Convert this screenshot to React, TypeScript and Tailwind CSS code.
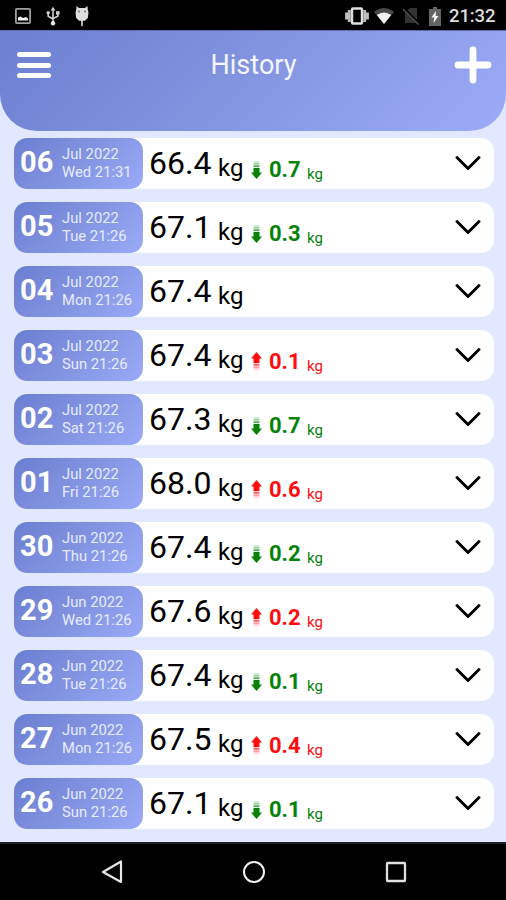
import React from "react";

type Trend = "up" | "down" | null;

interface Entry {
  day: string;
  month: string;
  time: string;
  weight: string;
  trend: Trend;
  delta: string;
}

const entries: Entry[] = [
  { day: "06", month: "Jul 2022", time: "Wed 21:31", weight: "66.4", trend: "down", delta: "0.7" },
  { day: "05", month: "Jul 2022", time: "Tue 21:26", weight: "67.1", trend: "down", delta: "0.3" },
  { day: "04", month: "Jul 2022", time: "Mon 21:26", weight: "67.4", trend: null, delta: "" },
  { day: "03", month: "Jul 2022", time: "Sun 21:26", weight: "67.4", trend: "up", delta: "0.1" },
  { day: "02", month: "Jul 2022", time: "Sat 21:26", weight: "67.3", trend: "down", delta: "0.7" },
  { day: "01", month: "Jul 2022", time: "Fri 21:26", weight: "68.0", trend: "up", delta: "0.6" },
  { day: "30", month: "Jun 2022", time: "Thu 21:26", weight: "67.4", trend: "down", delta: "0.2" },
  { day: "29", month: "Jun 2022", time: "Wed 21:26", weight: "67.6", trend: "up", delta: "0.2" },
  { day: "28", month: "Jun 2022", time: "Tue 21:26", weight: "67.4", trend: "down", delta: "0.1" },
  { day: "27", month: "Jun 2022", time: "Mon 21:26", weight: "67.5", trend: "up", delta: "0.4" },
  { day: "26", month: "Jun 2022", time: "Sun 21:26", weight: "67.1", trend: "down", delta: "0.1" },
];

function StatusBar() {
  return (
    <div className="flex h-[30px] items-center bg-black pt-[2px] pl-[15px] text-[#dedede]">
      <svg width="16" height="16" viewBox="0 0 16 16" className="shrink-0">
        <rect x="0.9" y="0.9" width="14.2" height="14.2" rx="1" fill="none" stroke="#a0a0a0" strokeWidth="1.8" />
        <path d="M3 12.5V9.500L5.500 8.500 8 10l3-1 2 1.5v2z" fill="#f2f2f2" />
      </svg>
      <svg width="14" height="20" viewBox="0 0 14 20" className="ml-[15px] shrink-0" fill="none" stroke="#cfcfcf" strokeWidth="1.6">
        <path d="M7 3v14M2.2 7.5v2.7L7 13M11.8 7v3.2L7 12.5" />
        <path d="M4.5 4.5 7 .8l2.5 3.7z" fill="#cfcfcf" stroke="none" />
        <circle cx="2.2" cy="6.8" r="1.7" fill="#cfcfcf" stroke="none" />
        <path d="M10 5.2h3.6v3.4H10z" fill="#cfcfcf" stroke="none" />
        <circle cx="7" cy="17.2" r="2.2" fill="#e8e8e8" stroke="none" />
      </svg>
      <svg width="14" height="20" viewBox="0 0 14 20" className="ml-[15px] shrink-0">
        <path d="M1.500 0 4 2h6l2.500-2 .2 3.500.8 3-.6 5.200L10 14.800H7.800V20H6.200v-5.200H4L1.100 11.700.500 6.500 1.300 3.500z" fill="#dedede" />
        <circle cx="4" cy="5.5" r="1" fill="#777" />
        <circle cx="10" cy="5.5" r="1" fill="#777" />
      </svg>
      <svg width="24" height="18" viewBox="0 0 24 18" className="ml-[256px] shrink-0">
        <path d="M1.500 5.500v7M4.300 3v12M19.700 3v12M22.500 5.500v7" stroke="#bdbdbd" strokeWidth="2.800" />
        <rect x="7" y="1.500" width="10" height="15" rx="1" fill="#000" stroke="#dedede" strokeWidth="2.400" />
      </svg>
      <svg width="20" height="16" viewBox="0 0 20 16" className="ml-[5px] shrink-0">
        <path d="M0 4Q10-4 20 4L10 16z" fill="#4a4a4a" />
        <path d="M2.800 7Q10 2 17.200 7L10 16z" fill="#f2f2f2" />
      </svg>
      <svg width="17" height="18" viewBox="0 0 17 18" className="ml-[9px] shrink-0">
        <path d="M7 1h7v15H2V6z" fill="#333" />
        <path d="M.500 1.500 16 17" stroke="#000" strokeWidth="3" />
        <path d="M0 2 15.500 17.500" stroke="#555" strokeWidth="1.300" />
      </svg>
      <svg width="12" height="19" viewBox="0 0 12 19" className="ml-[9px] shrink-0">
        <path d="M4 0h4v2h4v17H0V2h4z" fill="#646464" />
        <path d="M6.800 4 2.500 10.500h2.800L4.500 16 9.500 9H6.700z" fill="#fff" />
      </svg>
      <span className="ml-[8px] text-[18.500px] leading-[30px] font-medium tracking-[-0.1px] text-[#dedede]">21:32</span>
    </div>
  );
}

function Header() {
  return (
    <header className="flex h-[101px] items-start justify-between rounded-b-[37px] border-t border-[#596ab0] bg-[linear-gradient(135deg,#6c7fd0_0%,#8193df_45%,#9cabf7_100%)] pr-[14px] pl-[17px]">
      <button className="mt-[21px] flex w-[34px] flex-col gap-[5.500px]" aria-label="Menu">
        <span className="h-[5px] w-full rounded-full bg-white" />
        <span className="h-[5px] w-full rounded-full bg-white" />
        <span className="h-[5px] w-full rounded-full bg-white" />
      </button>
      <h1 className="mt-[18px] ml-[2px] text-[27px] leading-8 text-[#f5f6ff]">History</h1>
      <button className="mt-[15px]" aria-label="Add entry">
        <svg width="38" height="38" viewBox="0 0 38 38" stroke="#fff" strokeWidth="6.800" strokeLinecap="round">
          <path d="M19 4v30M4 19h30" />
        </svg>
      </button>
    </header>
  );
}

function TrendArrow({ up }: { up: boolean }) {
  return (
    <svg width="11" height="18" viewBox="0 0 11 18" fill="currentColor" className={up ? "mt-[22px] ml-px" : "mt-[23px] ml-px rotate-180"}>
      <path d="M5.500 0 11 6.500H8.500V11h-6V6.500H0z" />
      <path d="M2.500 11.800h6v2h-6z" opacity=".65" />
      <path d="M2.500 14.500h6v1.300h-6z" opacity=".5" />
      <path d="M2.500 16.600h6v1h-6z" opacity=".35" />
    </svg>
  );
}

function Row({ entry }: { entry: Entry }) {
  const up = entry.trend === "up";
  return (
    <li className="flex h-[51px] items-start rounded-[13px] bg-white">
      <div className="flex h-[51px] w-[129px] shrink-0 items-start rounded-[13px] bg-[linear-gradient(135deg,#6b7dcf_0%,#8294e1_50%,#9aaaf8_100%)] pl-[6px]">
        <span className="w-[42px] text-[29px] leading-[49px] font-bold text-white">{entry.day}</span>
        <div className="flex flex-col pt-[7px] text-[14.800px] leading-[18px] whitespace-nowrap text-[#e8ebff]">
          <span>{entry.month}</span>
          <span>{entry.time}</span>
        </div>
      </div>
      <span className="ml-[6px] w-[69px] text-[32px] leading-[51px] text-black">{entry.weight}</span>
      <span className="w-[32px] pt-[5px] text-[24px] leading-[51px] text-black">kg</span>
      {entry.trend && (
        <div className={up ? "flex items-start text-[#fb0d10]" : "flex items-start text-[#078209]"}>
          <TrendArrow up={up} />
          <span className="ml-[7px] w-[38px] pt-[6px] text-[22px] leading-[51px] font-bold">{entry.delta}</span>
          <span className="pt-[11px] text-[15px] leading-[51px]">kg</span>
        </div>
      )}
      <svg width="26" height="16" viewBox="0 0 26 16" className="mt-[17px] mr-[13px] ml-auto" fill="none" stroke="#000" strokeWidth="2.900" strokeLinecap="round" strokeLinejoin="round">
        <path d="M2 2.500 13 13.500 24 2.500" />
      </svg>
    </li>
  );
}

function NavigationBar() {
  return (
    <nav className="flex h-[58px] items-center justify-center gap-[119px] border-t-2 border-[#20212a] bg-black">
      <svg width="24" height="26" viewBox="0 0 24 26" fill="none" stroke="#e6e6e6" strokeWidth="2.200" strokeLinejoin="round">
        <path d="M22 2.500v20.500L4 13z" />
      </svg>
      <svg width="24" height="24" viewBox="0 0 24 24" fill="none" stroke="#f1f1f1" strokeWidth="2">
        <circle cx="12" cy="12" r="10" />
      </svg>
      <svg width="22" height="22" viewBox="0 0 22 22" fill="none" stroke="#e1e1e1" strokeWidth="2.300">
        <rect x="2" y="2" width="18" height="18" rx=".5" />
      </svg>
    </nav>
  );
}

export default function App() {
  return (
    <div className="flex h-[900px] w-[506px] flex-col overflow-hidden bg-[#e2e8ff] font-[Roboto,sans-serif]">
      <StatusBar />
      <Header />
      <ul className="flex flex-1 flex-col gap-[13px] pt-[7px] pr-[12px] pl-[14px]">
        {entries.map((entry) => (
          <Row key={entry.day} entry={entry} />
        ))}
      </ul>
      <NavigationBar />
    </div>
  );
}
